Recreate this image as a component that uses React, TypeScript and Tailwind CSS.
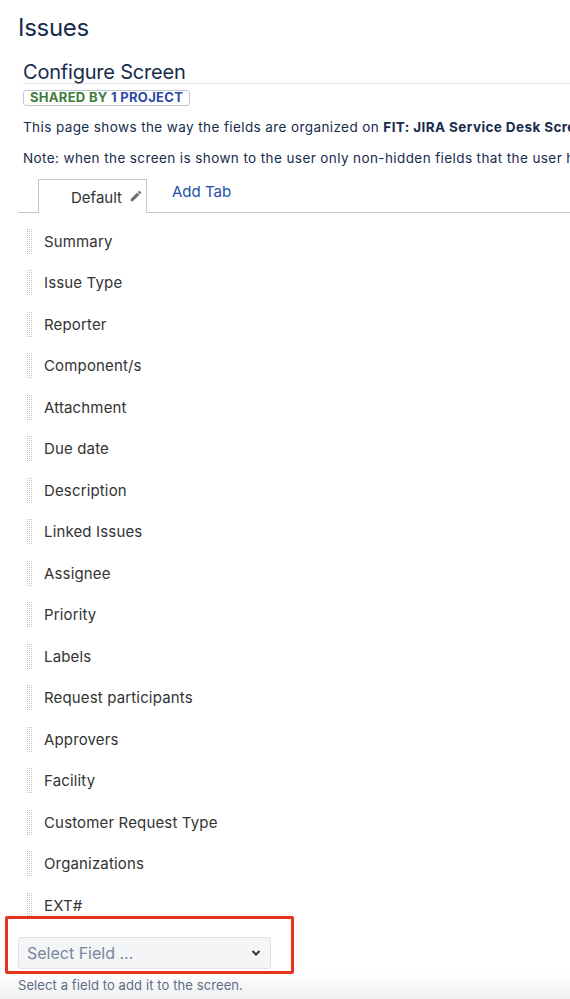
import React from "react";

const fields = [
  "Summary",
  "Issue Type",
  "Reporter",
  "Component/s",
  "Attachment",
  "Due date",
  "Description",
  "Linked Issues",
  "Assignee",
  "Priority",
  "Labels",
  "Request participants",
  "Approvers",
  "Facility",
  "Customer Request Type",
  "Organizations",
  "EXT#",
];

function Handle() {
  return (
    <svg width="9" height="26" viewBox="0 0 9 26" className="shrink-0">
      <defs>
        <pattern id="dots" width="2" height="2" patternUnits="userSpaceOnUse">
          <rect x="0" y="0" width="1" height="1" fill="#bfc4cc" />
        </pattern>
      </defs>
      <rect x="1" y="0" width="7" height="26" fill="url(#dots)" />
    </svg>
  );
}

export default function App() {
  return (
    <div
      className="w-[570px] h-[999px] overflow-hidden bg-white text-[#172b4d] relative"
      style={{ fontFamily: "Inter, 'Liberation Sans', sans-serif" }}
    >
      <h1 className="pl-[18px] pt-[12px] text-[24px] leading-[32px] font-normal tracking-[-0.3px]">Issues</h1>
      <div className="pl-[23px] mt-[17px]">
        <h2 className="text-[20px] leading-[22px] font-normal border-b border-[#dfe1e6] tracking-[-0.2px] h-[23px]">
          Configure Screen
        </h2>
        <div className="mt-[3px] inline-flex items-center h-[16px] px-[6px] border border-[#c1c7d0] rounded-[3px] text-[13px] font-bold leading-none tracking-[0.3px]">
          <span className="text-[#3f7d3f]">SHARED BY&nbsp;</span>
          <span className="text-[#2b4aa6]">1 PROJECT</span>
        </div>
        <p className="mt-[11px] text-[13.5px] leading-[16px] whitespace-nowrap tracking-[0.4px]">
          This page shows the way the fields are organized on <b>FIT: JIRA Service Desk Screen</b>
        </p>
        <p className="mt-[15px] text-[13.5px] leading-[16px] whitespace-nowrap tracking-[0.4px]">
          Note: when the screen is shown to the user only non-hidden fields that the user has permission to see will be displayed.
        </p>
      </div>
      <div className="ml-[18px] mt-[13px] flex items-end border-b border-[#c1c7d0] h-[34px]">
        <div className="ml-[20px] w-[109px] h-[34px] -mb-px border border-b-0 border-[#c1c7d0] bg-white flex items-center gap-[7px] pt-[3px] pl-[32px] text-[15px] text-[#333]">
          <span>Default</span>
          <svg width="14" height="14" viewBox="0 0 24 24" className="-mt-[5px]">
            <path d="M3 17.25V21h3.75L17.81 9.94l-3.75-3.75L3 17.25zM20.71 7.04a1 1 0 0 0 0-1.41l-2.34-2.34a1 1 0 0 0-1.41 0l-1.83 1.83 3.75 3.75 1.83-1.83z" fill="#707070" />
          </svg>
        </div>
        <div className="ml-[25px] h-[34px] pb-[6px] flex items-center text-[15px] text-[#2450a8]">Add Tab</div>
      </div>
      <div className="mt-[8px]">
        {fields.map((f) => (
          <div key={f} className="h-[41.5px] flex items-center pl-[25px] gap-[10px]">
            <Handle />
            <span className="text-[15px] text-[#333] tracking-[0.15px]">{f}</span>
          </div>
        ))}
      </div>
      <div className="absolute left-0 right-0 top-[972px] h-[27px] bg-gradient-to-b from-white to-[#eeeff1]" />
      <div className="absolute left-[5px] top-[916px] w-[289px] h-[58px] border-[3px] border-[#e8321b] rounded-[2px]" />
      <div className="absolute left-[18px] top-[937px] w-[253px] h-[32px] bg-[#f4f5f7] border border-[#dfe1e6] rounded-[3px] flex items-center justify-between pl-[8px] pr-[9px]">
        <span className="text-[16px] text-[#7a869a]">Select Field ...</span>
        <svg width="10" height="8" viewBox="0 0 10 8">
          <path d="M1.5 2l3.5 3.5L8.5 2" stroke="#333" strokeWidth="2" fill="none" />
        </svg>
      </div>
      <div className="absolute left-[18px] top-[976px] text-[13px] text-[#5e6c84] tracking-[0.1px]">
        Select a field to add it to the screen.
      </div>
    </div>
  );
}
